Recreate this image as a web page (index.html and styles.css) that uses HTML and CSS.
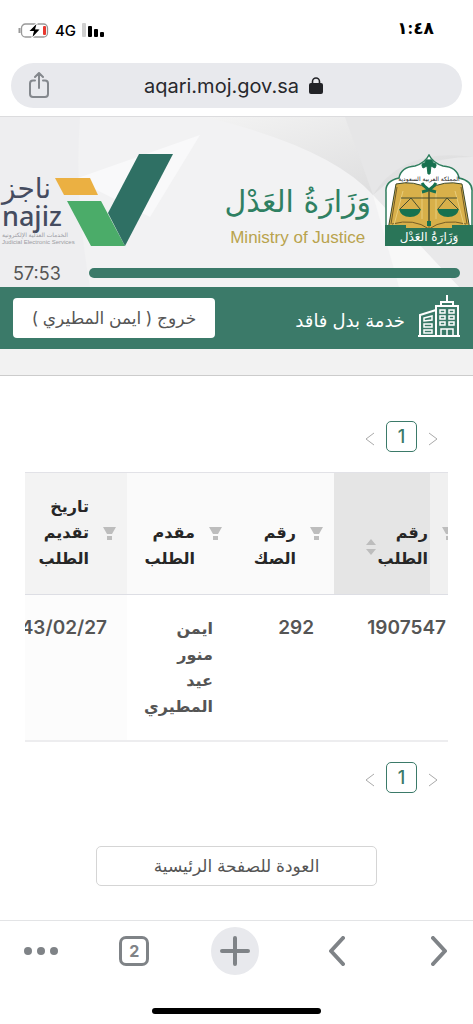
FILE: index.html
```html
<!DOCTYPE html>
<html lang="ar" dir="rtl">
<head>
    <meta charset="UTF-8">
    <meta name="viewport" content="width=device-width, initial-scale=1.0">
    <title>خدمة بدل فاقد</title>
    <link rel="stylesheet" href="styles.css">
</head>
<body>

    <!-- Phone status bar -->
    <div class="status-bar">
        <span class="clock">١:٤٨</span>
        <div class="status-icons">
            <svg width="22" height="14" viewBox="0 0 22 14">
                <rect x="0" y="0" width="4" height="14" rx="1" fill="#cfcfcf"/>
                <rect x="6" y="3" width="4" height="11" rx="1"/>
                <rect x="12" y="6" width="4" height="8" rx="1"/>
                <rect x="18" y="9" width="4" height="5" rx="1"/>
            </svg>
            <span class="network">4G</span>
            <svg width="31" height="15" viewBox="0 0 31 15">
                <path d="M1.500 5v5" stroke="#999" stroke-width="2"/>
                <rect x="3.500" y="1" width="26" height="13" rx="4" fill="#fff" stroke="#999" stroke-width="1.300"/>
                <path d="M19 0l-8 8.500h4.500L14 15l8-9h-5z" stroke="#fff" stroke-width="1.500"/>
                <path d="M18.500 1l-7 7h4.500L14.500 14l7-7.500H17z"/>
                <rect x="25" y="3" width="3" height="9" rx="1" fill="#e8382f"/>
            </svg>
        </div>
    </div>

    <!-- Address bar -->
    <div class="address-bar">
        <button class="url" type="button">
            <svg width="14" height="17" viewBox="0 0 14 17">
                <rect x="0" y="6" width="14" height="11" rx="2" fill="#222327"/>
                <path d="M3.500 7V4.500a3.500 3.500 0 0 1 7 0V7" fill="none" stroke="#222327" stroke-width="1.600"/>
            </svg>
            <span>aqari.moj.gov.sa</span>
        </button>
        <button class="share" type="button" aria-label="مشاركة">
            <svg width="20" height="26" viewBox="0 0 20 26" fill="none" stroke="#84888d" stroke-width="2" stroke-linecap="round" stroke-linejoin="round">
                <path d="M6 8.500H4a3 3 0 0 0-3 3V22a3 3 0 0 0 3 3h12a3 3 0 0 0 3-3V11.500a3 3 0 0 0-3-3h-2M10 16V1.500M6 5l4-4 4 4"/>
            </svg>
        </button>
    </div>

    <!-- Site header -->
    <header class="header">
        <svg class="header-bg" viewBox="0 0 473 170" preserveAspectRatio="none">
            <defs>
                <linearGradient id="shade" x1="0" y1="0" x2="1" y2="1">
                    <stop offset="0" stop-color="#f3f3f3"/>
                    <stop offset="1" stop-color="#d9d9da"/>
                </linearGradient>
            </defs>
            <path d="M0 0h80q-6 80 10 170H0z" fill="#eeeef0"/>
            <path d="M75 62L200 18 150 100z" fill="#f9f9fa"/>
            <path d="M205 0h268v40q-60 10-100 38Q330 30 205 0z" fill="url(#shade)"/>
            <path d="M345 0h128v40q-70-10-100 38z" fill="#e6e6e7"/>
            <path d="M373 78q40-38 100-38v130h-14z" fill="#e9e9ea"/>
            <path d="M373 78l86 92h-60z" fill="#f8f8f8"/>
        </svg>

        <div class="brands">
            <div class="ministry">
                <svg class="emblem" width="88" height="92" viewBox="0 0 88 92">
                    <path d="M1 91V38Q0 27 14 24q2-11 16-12Q40 9 44 1q4 8 14 11 14 1 16 12 14 3 13 14v53z" fill="#fff" stroke="#2f7e5e" stroke-width="1.500"/>
                    <path d="M3 76L11 30q18-4 33 5 15-9 33-5l8 46z" fill="#d8b04a" stroke="#3d4a2c"/>
                    <path d="M7 70q22-6 37 5 15-11 37-5M12 33L6 70M76 33l6 37M44 35v40" fill="none" stroke="#755d25"/>
                    <path d="M18 37l-9 34M70 37l9 34M37 37v28M51 37v28" stroke="#e9cc79" fill="none"/>
                    <text class="emblem-arc" x="44" y="27" text-anchor="middle">المملكة العربية السعودية</text>
                    <path d="M38 14q-3-5 2-5 0-4 4-3 4-1 4 3 5 0 2 5l-4-2-1 8h-2l-1-8z" fill="#17714f" stroke="#17714f"/>
                    <path d="M37 29q4 7 14 9M51 29q-4 7-14 9" fill="none" stroke="#17714f" stroke-width="3"/>
                    <path d="M16 44h56M44 35v34M26 44L15 55M26 44l9 11M62 44l-9 11M62 44l11 11" fill="none" stroke="#444d31"/>
                    <path d="M14 55h22q-2 8-11 8t-11-8zM52 55h22q-2 8-11 8t-11-8zM42 67h4v5h-4z" fill="#17714f"/>
                    <path d="M0 71h21v3h46v-3h21v21H0z" fill="#2a7558"/>
                    <text class="emblem-name" x="44" y="87" text-anchor="middle">وَزَارَةُ العَدْل</text>
                </svg>
                <div class="ministry-name">
                    <span class="ministry-ar">وَزَارَةُ العَدْل</span>
                    <span class="ministry-en">Ministry of Justice</span>
                </div>
            </div>
            <div class="najiz">
                <svg width="118" height="92" viewBox="0 0 118 92">
                    <path d="M0 24h35l8 17H9z" fill="#ebb042"/>
                    <path d="M12 47h34l24 45H36z" fill="#4bac69"/>
                    <path d="M84 0h34L70 92 53 59z" fill="#2f7064"/>
                </svg>
                <div class="najiz-name">
                    <span class="najiz-ar">ناجز</span>
                    <span class="najiz-en">najiz</span>
                    <span class="najiz-sub">الخدمات العدلية الإلكترونية</span>
                    <span class="najiz-sub">Judicial Electronic Services</span>
                </div>
            </div>
        </div>

        <div class="session">
            <div class="session-bar"></div>
            <span class="session-time">57:53</span>
        </div>
    </header>

    <!-- Service bar -->
    <div class="service-bar">
        <div class="service">
            <svg width="42" height="42" viewBox="0 0 42 42" fill="none" stroke="#fff" stroke-width="2">
                <path d="M0 41h42M2 41V20l16-5M18 41V11h22v30M23 11V7h12v4M29 7V0"/>
                <path d="M23 41v-7h12v7M29 34v7" stroke-width="1.500"/>
                <path d="M6 23l8-2v4l-8 1zM6 29h8v3H6zM6 35h8v3H6zM22 15h5v3h-5zM31 15h5v3h-5zM22 21h5v3h-5zM31 21h5v3h-5zM22 27h5v3h-5zM31 27h5v3h-5z" stroke-width="1.500"/>
            </svg>
            <h1>خدمة بدل فاقد</h1>
        </div>
        <button class="logout" type="button">خروج ( ايمن المطيري )</button>
    </div>
    <div class="sub-bar"></div>

    <main class="content">
        <nav class="pagination" aria-label="الصفحات">
            <button class="page-arrow" type="button" aria-label="السابق"><svg width="10" height="14" viewBox="0 0 10 14"><path d="M1 1l8 6-8 6"/></svg></button>
            <button class="page-number" type="button">1</button>
            <button class="page-arrow" type="button" aria-label="التالي"><svg width="10" height="14" viewBox="0 0 10 14"><path d="M9 1L1 7l8 6"/></svg></button>
        </nav>

        <div class="table-wrap">
            <table class="requests">
                <thead>
                    <tr>
                        <th class="col-number">
                            <div class="th-inner"><svg class="filter" width="13" height="13" viewBox="0 0 13 13"><path d="M0 0h13L9 7H4zM4 9h5v4H4z"/></svg><span>رقم الطلب</span><svg class="sorter" width="10" height="16" viewBox="0 0 10 16"><path d="M0 6l5-6 5 6zM0 10h10l-5 6z"/></svg></div>
                        </th>
                        <th class="col-deed">
                            <div class="th-inner"><svg class="filter" width="13" height="13" viewBox="0 0 13 13"><path d="M0 0h13L9 7H4zM4 9h5v4H4z"/></svg><span>رقم الصك</span></div>
                        </th>
                        <th class="col-name">
                            <div class="th-inner"><svg class="filter" width="13" height="13" viewBox="0 0 13 13"><path d="M0 0h13L9 7H4zM4 9h5v4H4z"/></svg><span>مقدم الطلب</span></div>
                        </th>
                        <th class="col-date">
                            <div class="th-inner"><svg class="filter" width="13" height="13" viewBox="0 0 13 13"><path d="M0 0h13L9 7H4zM4 9h5v4H4z"/></svg><span>تاريخ تقديم الطلب</span></div>
                        </th>
                    </tr>
                </thead>
                <tbody>
                    <tr>
                        <td>1907547</td>
                        <td>292</td>
                        <td class="name">ايمن منور عيد المطيري</td>
                        <td class="col-date">1443/02/27</td>
                    </tr>
                </tbody>
            </table>
        </div>

        <nav class="pagination" aria-label="الصفحات">
            <button class="page-arrow" type="button" aria-label="السابق"><svg width="10" height="14" viewBox="0 0 10 14"><path d="M1 1l8 6-8 6"/></svg></button>
            <button class="page-number" type="button">1</button>
            <button class="page-arrow" type="button" aria-label="التالي"><svg width="10" height="14" viewBox="0 0 10 14"><path d="M9 1L1 7l8 6"/></svg></button>
        </nav>

        <button class="home-button" type="button">العودة للصفحة الرئيسية</button>
    </main>

    <!-- Browser toolbar -->
    <footer class="toolbar">
        <div class="tools">
            <button class="tool" type="button" aria-label="رجوع"><svg width="16" height="30" viewBox="0 0 16 30"><path d="M2 2l12 13L2 28"/></svg></button>
            <button class="tool" type="button" aria-label="تقدم"><svg width="16" height="30" viewBox="0 0 16 30"><path d="M14 2L2 15l12 13"/></svg></button>
            <button class="tool tool-new" type="button" aria-label="تبويب جديد"><svg width="30" height="30" viewBox="0 0 30 30"><path d="M15 2v26M2 15h26"/></svg></button>
            <button class="tool tool-tabs" type="button"><span class="tab-count">2</span></button>
            <button class="tool tool-more" type="button" aria-label="المزيد"><svg width="34" height="8" viewBox="0 0 34 8"><g fill="#7f8387"><circle cx="4" cy="4" r="4"/><circle cx="17" cy="4" r="4"/><circle cx="30" cy="4" r="4"/></g></svg></button>
        </div>
        <div class="home-indicator"></div>
    </footer>

</body>
</html>
```

FILE: styles.css
```css
/* General reset */
* {
    margin: 0;
    padding: 0;
    box-sizing: border-box;
}

body {
    display: flex;
    flex-direction: column;
    min-height: 100vh;
    background-color: #fff;
    color: #555;
    font-family: Inter, "DejaVu Sans", sans-serif;
    font-size: 16px;
}

button {
    border: none;
    background: none;
    font-family: inherit;
    color: inherit;
    cursor: pointer;
}

svg {
    display: block;
    flex-shrink: 0;
}

/* Status bar */
.status-bar {
    display: flex;
    justify-content: space-between;
    align-items: center;
    height: 60px;
    padding: 0 39px 0 18px;
    color: #000;
}

.clock {
    padding-bottom: 4px;
    font-size: 17px;
    font-weight: bold;
}

.status-icons {
    display: flex;
    align-items: center;
    gap: 6px;
}

.network {
    font-size: 15px;
    font-weight: 500;
}

/* Address bar */
.address-bar {
    display: flex;
    align-items: center;
    height: 45px;
    margin: 3px 11px 8px;
    padding: 0 44px 0 18px;
    border-radius: 23px;
    background-color: #e8e9ed;
}

.url {
    display: flex;
    flex: 1;
    justify-content: center;
    align-items: center;
    gap: 10px;
    color: #27282c;
    font-family: Inter, sans-serif;
    font-size: 20px;
}

.share {
    padding-bottom: 2px;
}

/* Site header */
.header {
    position: relative;
    height: 171px;
    border-top: 1px solid #dcdcde;
    background-color: #f2f2f3;
}

.header-bg {
    position: absolute; /* Backdrop behind the logos */
    inset: 0;
    width: 100%;
    height: 100%;
}

.brands {
    position: relative;
    display: flex;
    justify-content: space-between;
    height: 146px;
    padding-top: 37px;
}

.ministry,
.najiz {
    display: flex;
    align-items: flex-start;
}

.ministry {
    gap: 14px;
}

.ministry-name {
    display: flex;
    flex-direction: column;
    align-items: center;
    padding-top: 20px;
}

.ministry-ar {
    color: #2f8062;
    font-family: "DejaVu Sans", sans-serif;
    font-size: 30px;
    line-height: 55px;
    white-space: nowrap;
}

.ministry-en {
    color: #b9a34d;
    font-family: "Liberation Sans", sans-serif;
    font-size: 17px;
    line-height: 18px;
}

.emblem-arc {
    fill: #222;
    font-family: "DejaVu Sans", sans-serif;
    font-size: 6px;
}

.emblem-name {
    fill: #fff;
    font-family: "DejaVu Sans", sans-serif;
    font-size: 12px;
}

/* The name lines are laid out left to right and run a little under the mark */
.najiz-name {
    display: flex;
    flex-direction: column;
    align-items: flex-start;
    direction: ltr;
    width: 55px;
    padding: 22px 0 0 2px;
    color: #454c60;
    white-space: nowrap;
}

.najiz-ar {
    font-size: 28px;
    line-height: 24px;
}

.najiz-en {
    font-family: "Noto Sans", sans-serif;
    font-size: 27px;
    line-height: 32px;
    font-weight: 500;
}

.najiz-sub {
    color: #9b9ca3;
    font-family: "Liberation Sans", "DejaVu Sans", sans-serif;
    font-size: 6px;
    line-height: 7px;
}

.session {
    position: relative;
    display: flex;
    align-items: center;
    height: 20px;
    padding: 0 13px;
}

.session-bar {
    flex: 1;
    height: 10px;
    border-radius: 5px;
    background-color: #3b7a69;
}

.session-time {
    width: 76px;
    text-align: left;
    color: #555;
    font-size: 18px;
}

/* Service bar */
.service-bar {
    display: flex;
    justify-content: space-between;
    align-items: center;
    height: 62px;
    padding: 0 13px;
    background-color: #3b7a69;
}

.service {
    display: flex;
    align-items: center;
    gap: 13px;
    padding-bottom: 4px;
}

.service h1 {
    padding-top: 8px;
    color: #fff;
    font-size: 18px;
    font-weight: normal;
}

.logout {
    width: 202px;
    height: 40px;
    border-radius: 4px;
    background-color: #fff;
    font-size: 17px;
}

.sub-bar {
    height: 27px;
    border-bottom: 1px solid #ccc;
    background-color: #f2f2f2;
}

/* Content */
.content {
    display: flex;
    flex: 1;
    flex-direction: column;
    padding: 45px 25px 0;
}

.pagination {
    display: flex;
    align-items: center;
    gap: 11px;
    padding: 0 10px;
}

.page-arrow svg {
    fill: none;
    stroke: #aaa;
    stroke-width: 1;
}

.page-arrow {
    padding-top: 5px;
}

.page-number {
    width: 31px;
    height: 31px;
    border: 1px solid #3b7a69;
    border-radius: 5px;
    color: #3b7a69;
    font-size: 18px;
    font-weight: 500;
}

.table-wrap {
    display: flex;
    overflow: hidden;
    margin: 20px 0;
}

/* The table is scrolled a little, its first column runs under the edge */
.requests {
    flex-shrink: 0;
    width: calc(100% + 48px);
    margin-right: -18px;
    border-collapse: separate;
    border-spacing: 0;
    table-layout: fixed;
    line-height: 26px;
}

.requests th {
    height: 123px;
    border-top: 1px solid #e2e2e7;
    border-bottom: 1px solid #dddee4;
    background-color: #fafafa;
    color: #262626;
    font-size: 16px;
    text-align: right;
    vertical-align: bottom;
}

.requests td {
    height: 147px;
    padding: 20px 20px 21px;
    border-bottom: 2px solid #ededef;
    font-size: 19px;
    font-weight: 600;
    text-align: right;
    vertical-align: top;
}

.requests .name {
    font-size: 16px;
}

.th-inner {
    display: flex;
    align-items: flex-end;
    gap: 14px;
    padding: 0 11px 23px 20px;
}

.requests .col-number {
    width: 132px;
    background: linear-gradient(to left, #f0f0f0 36px, #e5e5e5 36px);
}

.requests .col-deed {
    width: 101px;
}

.requests .col-name {
    width: 106px;
}

.requests th.col-date {
    background-color: #f3f3f3;
}

.requests td.col-date {
    padding-left: 0;
    background-color: #fcfcfc;
}

.filter,
.sorter {
    fill: #bdbdbd;
}

.filter {
    margin-bottom: 31px;
}

.col-number span {
    width: 50px;
}

.sorter {
    margin: 0 -12px 16px 0;
}

.home-button {
    align-self: center;
    width: 281px;
    height: 40px;
    margin-top: 53px;
    border: 1px solid #d5d5d5;
    border-radius: 5px;
    font-size: 17px;
}

/* Browser toolbar */
.toolbar {
    height: 104px;
    border-top: 1px solid #e3e4e6;
}

.tools {
    display: flex;
    justify-content: space-between;
    align-items: center;
    padding: 6px 10px 0 24px;
}

.tool {
    display: flex;
    justify-content: center;
    align-items: center;
    width: 48px;
    height: 48px;
}

.tool path {
    fill: none;
    stroke: #7f8387;
    stroke-width: 4;
    stroke-linecap: round;
    stroke-linejoin: round;
}

.tool-new {
    border-radius: 50%;
    background-color: #e8e9ed;
}

.tool-tabs {
    width: 44px;
}

.tool-more {
    width: 34px;
}

.tab-count {
    width: 30px;
    height: 30px;
    border: 3px solid #7f8387;
    border-radius: 7px;
    color: #7f8387;
    font-size: 16px;
    font-weight: 700;
    line-height: 24px;
}

.home-indicator {
    width: 169px;
    height: 6px;
    margin: 33px auto 0;
    border-radius: 3px;
    background-color: #000;
}
```
